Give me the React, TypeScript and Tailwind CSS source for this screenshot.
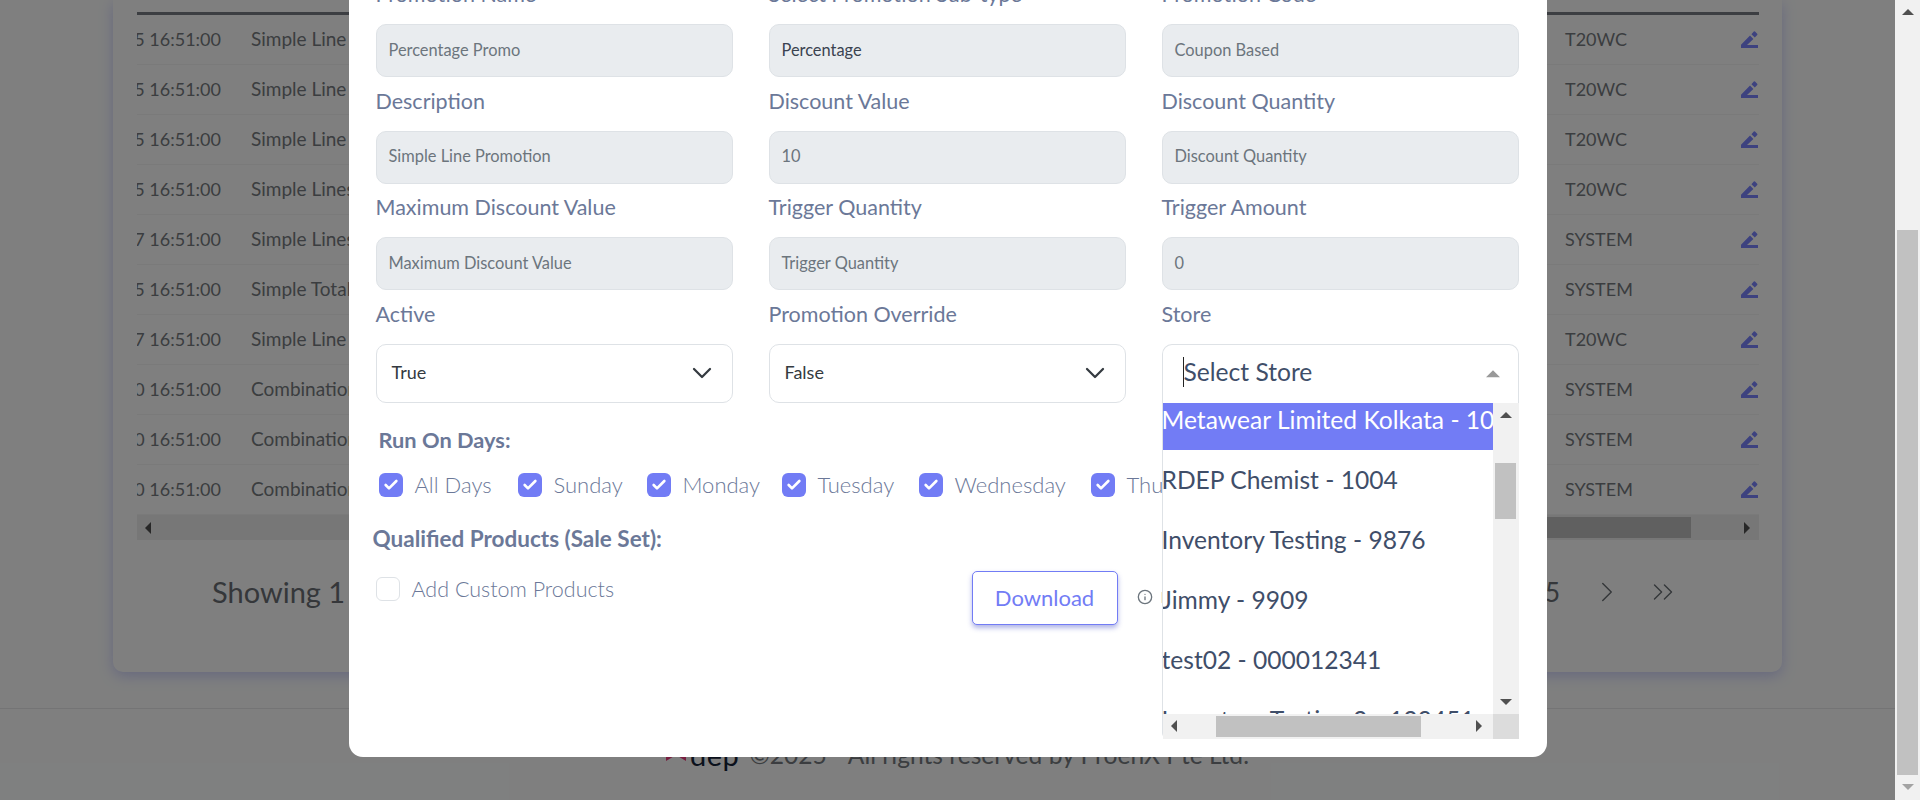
import { Check, ChevronDown, ChevronRight, ChevronsRight, Info } from 'lucide-react';

const rows = [
  ['2025-08-15 16:51:00', 'Simple Line Promotion', 'T20WC'],
  ['2025-08-15 16:51:00', 'Simple Line Promotion', 'T20WC'],
  ['2025-08-15 16:51:00', 'Simple Line Promotion', 'T20WC'],
  ['2025-08-15 16:51:00', 'Simple Lines Promotion', 'T20WC'],
  ['2025-08-17 16:51:00', 'Simple Lines Promotion', 'SYSTEM'],
  ['2025-08-15 16:51:00', 'Simple Total Promotion', 'SYSTEM'],
  ['2025-08-17 16:51:00', 'Simple Line Promotion', 'T20WC'],
  ['2025-08-10 16:51:00', 'Combination Promotion', 'SYSTEM'],
  ['2025-08-10 16:51:00', 'Combination Promotion', 'SYSTEM'],
  ['2025-08-10 16:51:00', 'Combination Promotion', 'SYSTEM'],
];

const fields = [
  ['Promotion Name', 'Percentage Promo', false],
  ['Select Promotion Sub-type', 'Percentage', true],
  ['Promotion Code', 'Coupon Based', false],
  ['Description', 'Simple Line Promotion', false],
  ['Discount Value', '10', false],
  ['Discount Quantity', 'Discount Quantity', false],
  ['Maximum Discount Value', 'Maximum Discount Value', false],
  ['Trigger Quantity', 'Trigger Quantity', false],
  ['Trigger Amount', '0', false],
] as const;

const days = [
  ['All Days', 'w-[139px]'],
  ['Sunday', 'w-[129px]'],
  ['Monday', 'w-[135px]'],
  ['Tuesday', 'w-[137px]'],
  ['Wednesday', 'w-[172px]'],
  ['Thursday', 'w-[150px]'],
  ['Friday', 'w-[120px]'],
];

const stores = [
  'Metawear Limited Kolkata - 1001',
  'RDEP Chemist - 1004',
  'Inventory Testing - 9876',
  'Jimmy - 9909',
  'test02 - 000012341',
  'Inventory Testing 2 - 123451',
];

const Arrow = ({ dir, className }: { dir: 'up' | 'down' | 'left' | 'right'; className?: string }) => {
  const points = {
    up: '0,8 6,2 12,8',
    down: '0,3 12,3 6,9',
    left: '8,0 8,12 2,6',
    right: '3,0 3,12 9,6',
  }[dir];
  return (
    <svg width="12" height="12" viewBox="0 0 12 12" className={className}>
      <polygon points={points} fill="currentColor" />
    </svg>
  );
};

const Pencil = () => (
  <svg width="17" height="17" viewBox="0 0 17 17" className="text-[#7a84ff]">
    <path d="M0 17 V13.8 L9 4.6 L12.4 8 L6 14 H17 V17 Z" fill="currentColor" />
    <path d="M10.4 3.2 L12.8 0.6 Q13.4 0 14 0.6 L16.2 2.8 Q16.8 3.4 16.2 4 L13.8 6.4 Z" fill="currentColor" />
  </svg>
);

const BackgroundPage = () => (
  <div className="flex h-full w-full flex-col overflow-hidden bg-[#feffff]">
    <div className="ml-[113px] flex h-[672px] w-[1669px] shrink-0 flex-col rounded-b-[10px] bg-white pl-6 pr-[23px] pt-3 shadow-[0_4px_14px_rgba(114,124,245,0.35)]">
      <div className="h-[3px] shrink-0 bg-[#787c84]" />
      {rows.map((row, i) => (
        <div key={i} className="flex h-[50px] shrink-0 items-center border-b border-[#f4f4f4] text-[18px] text-[#767b80]">
          <div className="flex w-[84px] shrink-0 justify-end overflow-hidden whitespace-nowrap">{row[0]}</div>
          <div className="ml-[30px] w-[1314px] shrink-0 whitespace-nowrap text-[19px]">{row[1]}</div>
          <div className="w-[176px] shrink-0">{row[2]}</div>
          <Pencil />
        </div>
      ))}
      <div className="flex h-[25px] shrink-0 items-center justify-between bg-[#eeeeee] px-[6px] text-[#505050]">
        <Arrow dir="left" />
        <div className="ml-[300px] mr-[50px] h-[21px] flex-1 bg-[#c1c1c1]" />
        <Arrow dir="right" />
      </div>
      <div className="mt-[32px] flex h-[40px] shrink-0 items-center text-[#6a6f75]">
        <span className="ml-[75px] text-[29px]">Showing 1 to 10 of 48 entries</span>
        <div className="ml-auto mr-[79px] flex items-center">
          <span className="text-[26px]">5</span>
          <ChevronRight size={34} strokeWidth={1} className="ml-[30px]" />
          <ChevronsRight size={34} strokeWidth={1} className="ml-[22px]" />
        </div>
      </div>
    </div>
    <div className="mt-9 flex h-[92px] items-center justify-center border-t border-[#e8e8ea] pl-[20px]">
      <div className="flex items-center">
        <svg width="20" height="20" viewBox="0 0 20 20" className="-mt-[6px]">
          <polygon points="10,0 20,6 20,20 10,14 0,20 0,6" fill="#f03d80" />
        </svg>
        <span className="ml-[4px] text-[29px] leading-none tracking-[0.5px] text-[#152238]">dep</span>
        <span className="ml-[10px] mt-px text-[24.6px] text-[#767b80]">©2025 - All rights reserved by ProenX Pte Ltd.</span>
      </div>
    </div>
  </div>
);

const StoreDropdown = () => (
  <div className="relative">
    <div className="flex h-[59px] items-center justify-between rounded-t-[10px] border border-b-0 border-[#dee2e6] bg-white pb-[3px] pl-5 pr-[18px]">
      <span className="border-l border-[#222] text-[24.6px] leading-[30px] text-[#3f4e69]">Select Store</span>
      <Arrow dir="up" className="mt-[5px] h-[14px] w-[14px] text-[#999]" />
    </div>
    <div className="absolute left-0 top-full z-10 flex h-[336px] w-full flex-col rounded-b-[6px] border-l border-[#dee2e6] bg-white">
      <div className="flex h-[311px] min-h-0">
        <div className="w-[330px] shrink-0 overflow-hidden text-[24.6px] text-[#3f4e69]">
          <div className="-mt-[13px] -ml-px w-[420px]">
            {stores.map((s, i) => (
              <div key={s} className={`flex h-[60px] items-center whitespace-nowrap ${i === 0 ? 'w-[331px] overflow-hidden bg-[#727cf5] text-white' : ''}`}>
                {s}
              </div>
            ))}
          </div>
        </div>
        <div className="flex flex-1 flex-col items-center bg-[#f1f1f1] text-[#505050]">
          <Arrow dir="up" className="mt-[7px]" />
          <div className="mt-[41px] h-[56px] w-[21px] bg-[#c1c1c1]" />
          <Arrow dir="down" className="mb-[6px] mt-auto" />
        </div>
      </div>
      <div className="flex h-[25px] shrink-0 items-center">
        <div className="flex h-full w-[330px] items-center bg-[#f1f1f1] pl-[6px] text-[#505050]">
          <Arrow dir="left" />
          <div className="ml-[35px] h-[21px] w-[205px] bg-[#c1c1c1]" />
          <Arrow dir="right" className="ml-[52px]" />
        </div>
        <div className="h-full flex-1 bg-[#dcdcdc]" />
      </div>
    </div>
  </div>
);

const Modal = () => (
  <div className="-mt-[29.67px] flex h-[786.67px] w-[1198px] shrink-0 flex-col rounded-b-[14px] bg-white pl-[27px] pr-[28px] font-['Lato',sans-serif]">
    <div className="grid grid-cols-3 gap-x-9">
      {fields.map(([label, value, dark]) => (
        <div key={label}>
          <div className="flex h-[53.67px] items-center pb-[6px] text-[21.5px] text-[#6b7898]">{label}</div>
          <div className={`flex h-[53px] items-center rounded-[10px] border border-[#dee2e6] bg-[#e9ecef] px-3 pb-px text-[16.4px] ${dark ? 'text-[#3a4250]' : 'text-[#6c757d]'}`}>
            {value}
          </div>
        </div>
      ))}
      {['Active', 'Promotion Override'].map((label, i) => (
        <div key={label}>
          <div className="flex h-[53.67px] items-center pb-[6px] text-[21.5px] text-[#6b7898]">{label}</div>
          <div className="flex h-[59px] items-center justify-between rounded-[10px] border border-[#dee2e6] bg-white pl-[15px] pr-[14px] text-[18px] text-[#343a40]">
            <span className="-mt-[2px]">{i === 0 ? 'True' : 'False'}</span>
            <ChevronDown size={32} strokeWidth={1.7} className="text-[#343a40]" />
          </div>
        </div>
      ))}
      <div>
        <div className="flex h-[53.67px] items-center pb-[6px] text-[21.5px] text-[#6b7898]">Store</div>
        <StoreDropdown />
      </div>
    </div>
    <div className="ml-[3px] mt-[22px] text-[21.8px] font-bold leading-[30px] text-[#6b7898]">Run On Days:</div>
    <div className="ml-[3px] mt-[15px] flex whitespace-nowrap">
      {days.map(([day, width]) => (
        <div key={day} className={`flex h-[30px] shrink-0 items-center ${width}`}>
          <span className="flex h-6 w-6 items-center justify-center rounded-[6px] bg-[#727cf5]">
            <Check size={16} strokeWidth={4} className="text-white" />
          </span>
          <span className="ml-3 text-[22px] font-light leading-[30px] text-[#6b7898]">{day}</span>
        </div>
      ))}
    </div>
    <div className="-ml-[3px] mt-[24px] text-[22.5px] font-bold leading-[30px] text-[#6b7898]">Qualified Products (Sale Set):</div>
    <div className="mt-[17px] flex items-start">
      <div className="mt-[3px] flex h-[30px] w-[596px] shrink-0 items-center">
        <span className="h-6 w-6 rounded-[6px] border border-[#dee2e6] bg-white" />
        <span className="ml-3 text-[21.5px] font-light leading-[30px] text-[#6b7898]">Add Custom Products</span>
      </div>
      <button className="flex h-[54px] w-[146px] items-center justify-center rounded-[5px] border border-[#727cf5] bg-white pb-px text-[22px] text-[#727cf5] shadow-[0_3px_5px_rgba(80,90,200,0.45)]">
        Download
      </button>
      <div className="ml-[19px] mt-[14px] flex items-center whitespace-nowrap text-[16px] text-[#6c757d]">
        <Info size={16} />
        <span className="ml-2">Download sample file</span>
      </div>
    </div>
  </div>
);

export default function App() {
  return (
    <div className="flex h-[800px] w-[1920px] overflow-hidden font-['Lato',sans-serif]">
      <div className="relative h-full w-[1895px] shrink-0">
        <BackgroundPage />
        <div className="absolute inset-0 flex justify-center bg-black/50">
          <Modal />
        </div>
      </div>
      <div className="flex h-full w-[25px] shrink-0 flex-col items-center bg-[#f1f1f1]">
        <Arrow dir="up" className="mt-[7px] text-[#505050]" />
        <div className="mt-[211px] h-[545px] w-[21px] bg-[#c1c1c1]" />
        <Arrow dir="down" className="mt-[6px] text-[#a3a3a3]" />
      </div>
    </div>
  );
}
